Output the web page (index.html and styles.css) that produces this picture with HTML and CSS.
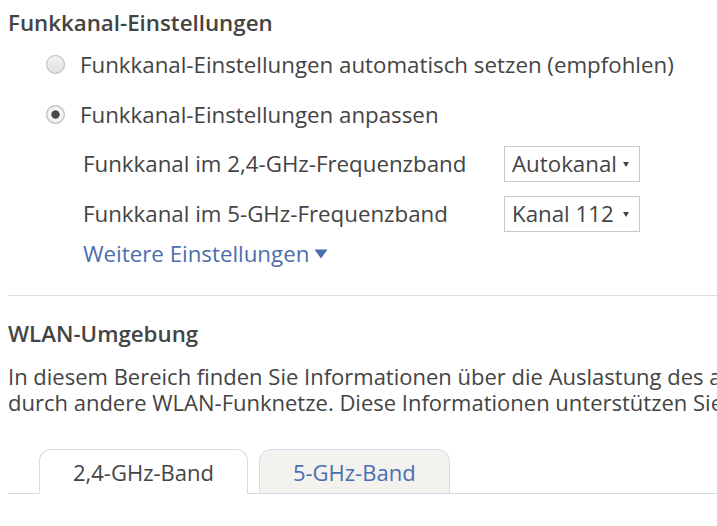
FILE: index.html
```html
<!DOCTYPE html>
<html lang="de">
<head>
<meta charset="utf-8">
<title>Funkkanal</title>
<link rel="stylesheet" href="styles.css">
</head>
<body>
<div class="page">
  <h2 class="section-title">Funkkanal-Einstellungen</h2>
  <div class="radio-group">
    <label class="radio-option"><span class="radio"></span><span>Funkkanal-Einstellungen automatisch setzen (empfohlen)</span></label>
    <label class="radio-option"><span class="radio checked"></span><span>Funkkanal-Einstellungen anpassen</span></label>
  </div>
  <div class="custom">
    <div class="channel-grid">
      <span class="channel-label">Funkkanal im 2,4-GHz-Frequenzband</span>
      <div class="select"><span>Autokanal</span><span class="caret"></span></div>
      <span class="channel-label">Funkkanal im 5-GHz-Frequenzband</span>
      <div class="select"><span>Kanal 112</span><span class="caret"></span></div>
    </div>
    <a class="more-link">Weitere Einstellungen<svg class="more-arrow" width="14" height="10" viewBox="0 0 14 10"><polygon points="0.5,0.5 13.5,0.5 7,9.5" fill="#4a6fae"/></svg></a>
  </div>
  <hr class="divider">
  <h2 class="section-title wlan-title">WLAN-Umgebung</h2>
  <p class="intro">In diesem Bereich finden Sie Informationen über die Auslastung des ausgewählten Funkkanals<br>durch andere WLAN-Funknetze. Diese Informationen unterstützen Sie bei der Auswahl eines Funkkanals.</p>
  <div class="tabs">
    <div class="tab active">2,4-GHz-Band</div>
    <div class="tab">5-GHz-Band</div>
  </div>
</div>
</body>
</html>
```
FILE: styles.css
```css
html, body {
  margin: 0;
  padding: 0;
  background: #fff;
  overflow: hidden;
}
body {
  font-family: "Open Sans", "Noto Sans", sans-serif;
  font-size: 22.3px;
  line-height: 26px;
  color: #444;
}
.page {
  padding: 10.35px 0 0 8px;
  width: 1000px;
}
.section-title {
  margin: 0;
  font-size: 22.3px;
  font-weight: 600;
  line-height: 26px;
  color: #444;
}
.radio-group {
  margin-top: 16px;
  padding-left: 38px;
  display: flex;
  flex-direction: column;
  gap: 24px;
}
.radio-option {
  display: flex;
  align-items: center;
  gap: 15px;
}
.radio {
  width: 17px;
  height: 17px;
  border-radius: 50%;
  border: 1px solid #b7b7b7;
  background: linear-gradient(#f4f4f4, #dedede);
  margin-top: -1px;
  flex: none;
}
.radio.checked {
  background: radial-gradient(circle, #4a4a4a 0, #4a4a4a 3.8px, #f6f6f6 4.6px, #f6f6f6 6.2px, #e0e0e0 8.5px);
}
.custom {
  padding-left: 75px;
  margin-top: 17.65px;
}
.channel-grid {
  display: grid;
  grid-template-columns: 421px 136px;
  grid-auto-rows: 36px;
  row-gap: 14px;
  align-items: center;
}
.select {
  box-sizing: border-box;
  height: 36px;
  border: 1px solid #c9c9c9;
  display: flex;
  align-items: center;
  justify-content: space-between;
  padding: 0 10px 0 7px;
  background: #fff;
}
.caret {
  width: 0;
  height: 0;
  border-left: 3px solid transparent;
  border-right: 3px solid transparent;
  border-top: 5px solid #444;
  margin-top: 1px;
}
.more-link {
  display: inline-flex;
  align-items: center;
  gap: 5px;
  margin-top: 9px;
  color: #4a6fae;
  text-decoration: none;
}
.more-arrow {
  margin-top: 1px;
}
.divider {
  border: 0;
  border-top: 1px solid #dcdcdc;
  margin: 28px 0 0 0;
  height: 0;
}
.wlan-title {
  margin-top: 25.35px;
}
.intro {
  margin: 16px 0 0 0;
  font-size: 22px;
  white-space: nowrap;
}
.tabs {
  margin-top: 33.65px;
  display: flex;
  gap: 11px;
  padding-left: 31px;
  border-bottom: 1px solid #d3dde4;
  font-size: 22px;
}
.tab {
  border: 1px solid #d3dde4;
  border-radius: 12px 12px 0 0;
  padding: 9.35px 33px 7.65px;
  margin-bottom: -1px;
  background: #f3f2ef;
  color: #4a6fae;
}
.tab.active {
  background: #fff;
  color: #444;
  border-bottom-color: #fff;
}
```
